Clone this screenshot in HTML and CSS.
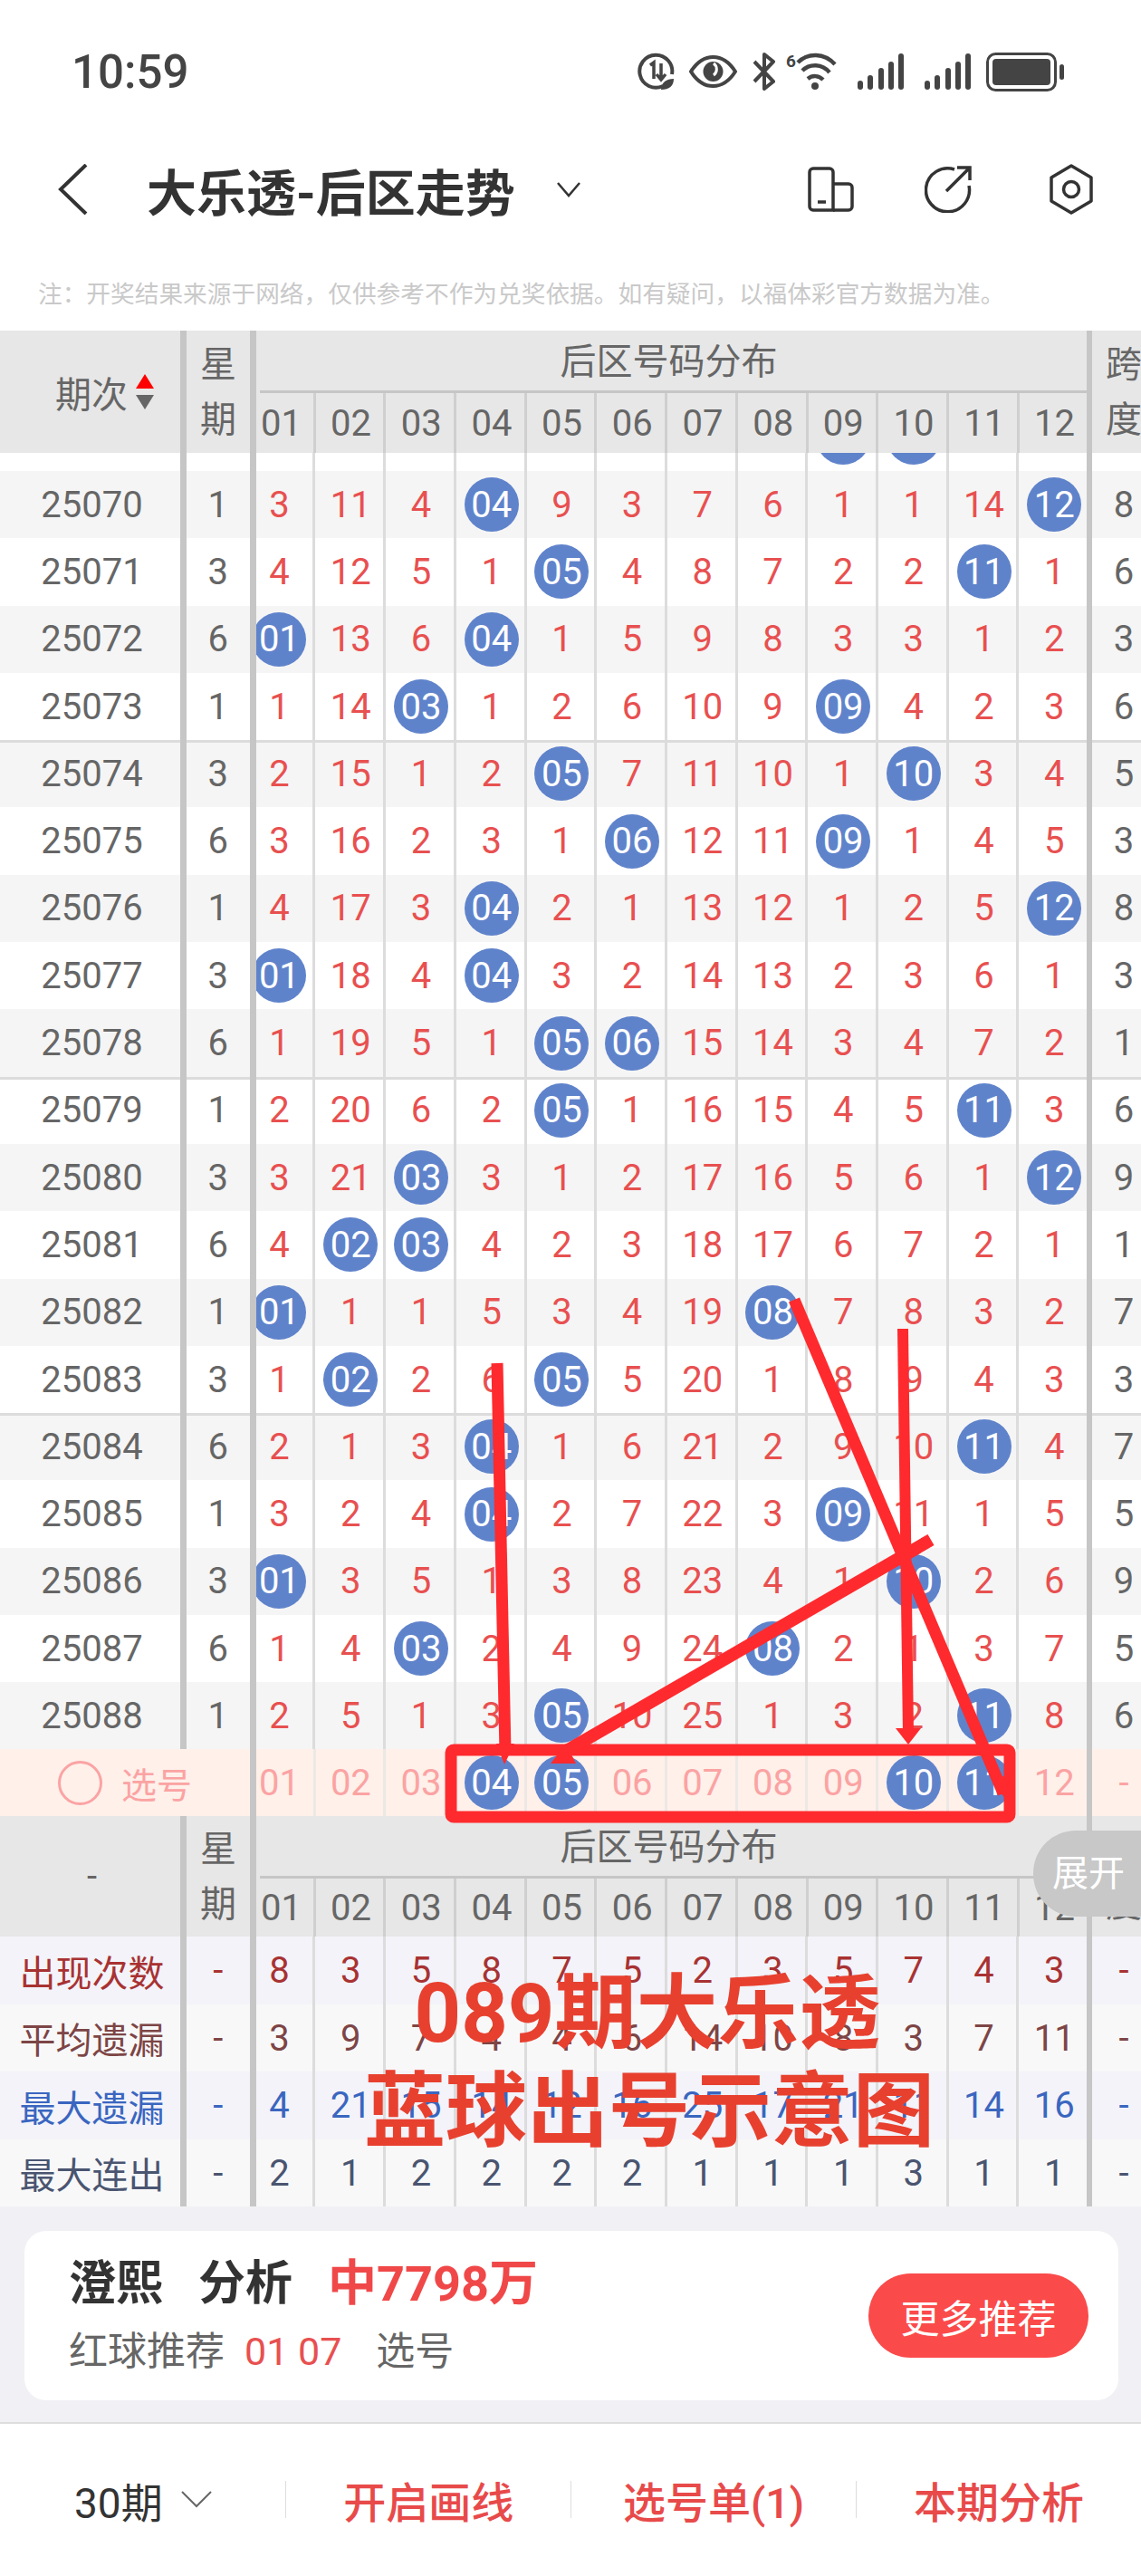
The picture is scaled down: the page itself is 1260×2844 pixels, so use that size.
FILE: index.html
```html
<!DOCTYPE html>
<html lang="zh-CN">
<head>
    <meta charset="UTF-8">
    <title>大乐透-后区走势</title>
    <link rel="stylesheet" href="styles.css">
</head>
<body>

<!-- 状态栏 -->
<div class="status">
    <span class="time">10:59</span>
    <div class="status-icons">
        <svg width="41" height="42" viewBox="0 0 41 42" fill="none" stroke="#444" stroke-width="4"><path d="M28 37 A18 18 0 1 1 38 24"/><path d="M14 14l4-3v18M26 12v17M21 24l5 6 5-6" stroke-width="3.500"/><path d="M26 41c0-8 6-12 14-12 0 8-5 12-14 12z" fill="#444" stroke="none"/></svg>
        <svg width="53" height="36" viewBox="0 0 53 36" fill="none" stroke="#444" stroke-width="4"><path d="M2 18C9 7 17 2 26.500 2S44 7 51 18C44 29 36 34 26.500 34S9 29 2 18z"/><circle cx="26.500" cy="18" r="11" fill="#444" stroke="none"/><path d="M27 9a8 8 0 0 1 0 13" stroke="#fff" stroke-width="3"/></svg>
        <svg width="27" height="42" viewBox="0 0 27 42" fill="none" stroke="#444" stroke-width="4" stroke-linejoin="round"><path d="M3 10l21 22-10 8V2l10 8L3 32"/></svg>
        <svg class="icon-wifi" width="57" height="42" viewBox="0 0 57 42" fill="none" stroke="#444" stroke-width="4.500"><text x="0" y="16" class="wifi-six">6</text><path d="M13 11C24 0 42 0 54 13M18 20c8-8 22-8 30 2M24 29c5-4 12-4 17 1"/><circle cx="32" cy="37" r="4" fill="#444" stroke="none"/></svg>
        <svg class="icon-sig" width="52" height="40" viewBox="0 0 52 40" fill="#444"><rect x="0" y="30" width="6" height="10" rx="3"/><rect x="11" y="24" width="6" height="16" rx="3"/><rect x="23" y="16" width="6" height="24" rx="3"/><rect x="34" y="9" width="6" height="31" rx="3"/><rect x="45" y="0" width="6" height="40" rx="3"/></svg>
        <svg class="icon-sig" width="52" height="40" viewBox="0 0 52 40" fill="#444"><rect x="0" y="30" width="6" height="10" rx="3"/><rect x="11" y="24" width="6" height="16" rx="3"/><rect x="23" y="16" width="6" height="24" rx="3"/><rect x="34" y="9" width="6" height="31" rx="3"/><rect x="45" y="0" width="6" height="40" rx="3"/></svg>
        <svg width="87" height="43" viewBox="0 0 87 43" fill="#444"><rect x="1.500" y="1.500" width="75" height="40" rx="9" fill="none" stroke="#444" stroke-width="3"/><rect x="7" y="7" width="64" height="29" rx="4"/><rect x="81" y="13" width="5" height="17" rx="2.500"/></svg>
    </div>
</div>

<!-- 标题栏 -->
<div class="nav">
    <svg class="nav-back" width="34" height="56" viewBox="0 0 34 56" fill="none" stroke="#333" stroke-width="4"><path d="M31 1L3 28l28 27"/></svg>
    <h1 class="nav-title">大乐透-后区走势</h1>
    <svg class="nav-down" width="26" height="17" viewBox="0 0 26 17" fill="none" stroke="#333" stroke-width="2.500"><path d="M1 1l12 14L25 1"/></svg>
    <svg class="nav-phone" width="51" height="50" viewBox="0 0 51 50" fill="none" stroke="#333" stroke-width="3.500"><path d="M6 2h18a4 4 0 0 1 4 4v42H6a4 4 0 0 1-4-4V6a4 4 0 0 1 4-4z"/><path d="M28 19h17a4 4 0 0 1 4 4v21a4 4 0 0 1-4 4H28"/><path d="M11 39h9"/></svg>
    <svg class="nav-share" width="52" height="52" viewBox="0 0 52 52" fill="none" stroke="#333" stroke-width="3.500"><path d="M33 4A24 24 0 1 0 49 22"/><path d="M24 28L50 2M36 2h14v14"/></svg>
    <svg class="nav-gear" width="50" height="56" viewBox="0 0 50 56" fill="none" stroke="#333" stroke-width="3.500" stroke-linejoin="round"><path d="M25 2l22 13v26L25 54 3 41V15z"/><circle cx="25" cy="28" r="8.500"/></svg>
</div>

<p class="note">注：开奖结果来源于网络，仅供参考不作为兑奖依据。如有疑问，以福体彩官方数据为准。</p>

<!-- 表头 -->
<div class="thead">
    <div class="th-qi">
        期次
        <span class="sort"><em class="up"></em><em class="down"></em></span>
    </div>
    <div class="th-wk"><span>星</span><span>期</span></div>
    <div class="th-mid">
        <div class="th-title">后区号码分布</div>
        <div class="th-nums"><i>01</i><i>02</i><i>03</i><i>04</i><i>05</i><i>06</i><i>07</i><i>08</i><i>09</i><i>10</i><i>11</i><i>12</i></div>
    </div>
    <div class="th-kd"><span>跨</span><span>度</span></div>
</div>

<!-- 走势数据 -->
<div class="rows">
    <div class="row row-first"><span class="qi"></span><span class="wk"></span><i></i><i></i><i></i><i></i><i></i><i></i><i></i><i></i><i><b></b></i><i><b></b></i><i></i><i></i><span class="kd"></span></div>
    <div class="row alt"><span class="qi">25070</span><span class="wk">1</span><i>3</i><i>11</i><i>4</i><i><b>04</b></i><i>9</i><i>3</i><i>7</i><i>6</i><i>1</i><i>1</i><i>14</i><i><b>12</b></i><span class="kd">8</span></div>
    <div class="row"><span class="qi">25071</span><span class="wk">3</span><i>4</i><i>12</i><i>5</i><i>1</i><i><b>05</b></i><i>4</i><i>8</i><i>7</i><i>2</i><i>2</i><i><b>11</b></i><i>1</i><span class="kd">6</span></div>
    <div class="row alt"><span class="qi">25072</span><span class="wk">6</span><i><b>01</b></i><i>13</i><i>6</i><i><b>04</b></i><i>1</i><i>5</i><i>9</i><i>8</i><i>3</i><i>3</i><i>1</i><i>2</i><span class="kd">3</span></div>
    <div class="row"><span class="qi">25073</span><span class="wk">1</span><i>1</i><i>14</i><i><b>03</b></i><i>1</i><i>2</i><i>6</i><i>10</i><i>9</i><i><b>09</b></i><i>4</i><i>2</i><i>3</i><span class="kd">6</span></div>
    <div class="row alt sep"><span class="qi">25074</span><span class="wk">3</span><i>2</i><i>15</i><i>1</i><i>2</i><i><b>05</b></i><i>7</i><i>11</i><i>10</i><i>1</i><i><b>10</b></i><i>3</i><i>4</i><span class="kd">5</span></div>
    <div class="row"><span class="qi">25075</span><span class="wk">6</span><i>3</i><i>16</i><i>2</i><i>3</i><i>1</i><i><b>06</b></i><i>12</i><i>11</i><i><b>09</b></i><i>1</i><i>4</i><i>5</i><span class="kd">3</span></div>
    <div class="row alt"><span class="qi">25076</span><span class="wk">1</span><i>4</i><i>17</i><i>3</i><i><b>04</b></i><i>2</i><i>1</i><i>13</i><i>12</i><i>1</i><i>2</i><i>5</i><i><b>12</b></i><span class="kd">8</span></div>
    <div class="row"><span class="qi">25077</span><span class="wk">3</span><i><b>01</b></i><i>18</i><i>4</i><i><b>04</b></i><i>3</i><i>2</i><i>14</i><i>13</i><i>2</i><i>3</i><i>6</i><i>1</i><span class="kd">3</span></div>
    <div class="row alt"><span class="qi">25078</span><span class="wk">6</span><i>1</i><i>19</i><i>5</i><i>1</i><i><b>05</b></i><i><b>06</b></i><i>15</i><i>14</i><i>3</i><i>4</i><i>7</i><i>2</i><span class="kd">1</span></div>
    <div class="row sep"><span class="qi">25079</span><span class="wk">1</span><i>2</i><i>20</i><i>6</i><i>2</i><i><b>05</b></i><i>1</i><i>16</i><i>15</i><i>4</i><i>5</i><i><b>11</b></i><i>3</i><span class="kd">6</span></div>
    <div class="row alt"><span class="qi">25080</span><span class="wk">3</span><i>3</i><i>21</i><i><b>03</b></i><i>3</i><i>1</i><i>2</i><i>17</i><i>16</i><i>5</i><i>6</i><i>1</i><i><b>12</b></i><span class="kd">9</span></div>
    <div class="row"><span class="qi">25081</span><span class="wk">6</span><i>4</i><i><b>02</b></i><i><b>03</b></i><i>4</i><i>2</i><i>3</i><i>18</i><i>17</i><i>6</i><i>7</i><i>2</i><i>1</i><span class="kd">1</span></div>
    <div class="row alt"><span class="qi">25082</span><span class="wk">1</span><i><b>01</b></i><i>1</i><i>1</i><i>5</i><i>3</i><i>4</i><i>19</i><i><b>08</b></i><i>7</i><i>8</i><i>3</i><i>2</i><span class="kd">7</span></div>
    <div class="row"><span class="qi">25083</span><span class="wk">3</span><i>1</i><i><b>02</b></i><i>2</i><i>6</i><i><b>05</b></i><i>5</i><i>20</i><i>1</i><i>8</i><i>9</i><i>4</i><i>3</i><span class="kd">3</span></div>
    <div class="row alt sep"><span class="qi">25084</span><span class="wk">6</span><i>2</i><i>1</i><i>3</i><i><b>04</b></i><i>1</i><i>6</i><i>21</i><i>2</i><i>9</i><i>10</i><i><b>11</b></i><i>4</i><span class="kd">7</span></div>
    <div class="row"><span class="qi">25085</span><span class="wk">1</span><i>3</i><i>2</i><i>4</i><i><b>04</b></i><i>2</i><i>7</i><i>22</i><i>3</i><i><b>09</b></i><i>11</i><i>1</i><i>5</i><span class="kd">5</span></div>
    <div class="row alt"><span class="qi">25086</span><span class="wk">3</span><i><b>01</b></i><i>3</i><i>5</i><i>1</i><i>3</i><i>8</i><i>23</i><i>4</i><i>1</i><i><b>10</b></i><i>2</i><i>6</i><span class="kd">9</span></div>
    <div class="row"><span class="qi">25087</span><span class="wk">6</span><i>1</i><i>4</i><i><b>03</b></i><i>2</i><i>4</i><i>9</i><i>24</i><i><b>08</b></i><i>2</i><i>1</i><i>3</i><i>7</i><span class="kd">5</span></div>
    <div class="row alt"><span class="qi">25088</span><span class="wk">1</span><i>2</i><i>5</i><i>1</i><i>3</i><i><b>05</b></i><i>10</i><i>25</i><i>1</i><i>3</i><i>2</i><i><b>11</b></i><i>8</i><span class="kd">6</span></div>
</div>

<!-- 选号行 -->
<div class="row pick">
    <span class="qi"><em class="pick-dot"></em>选号</span><span class="wk"></span>
    <i>01</i><i>02</i><i>03</i><i><b>04</b></i><i><b>05</b></i><i>06</i><i>07</i><i>08</i><i>09</i><i><b>10</b></i><i><b>11</b></i><i>12</i><span class="kd">-</span>
</div>

<!-- 统计 -->
<div class="thead thead-b">
    <div class="th-qi th-dash">-</div>
    <div class="th-wk"><span>星</span><span>期</span></div>
    <div class="th-mid">
        <div class="th-title">后区号码分布</div>
        <div class="th-nums"><i>01</i><i>02</i><i>03</i><i>04</i><i>05</i><i>06</i><i>07</i><i>08</i><i>09</i><i>10</i><i>11</i><i>12</i></div>
    </div>
    <div class="th-kd"><span>跨</span><span>度</span></div>
</div>
<div class="row stat stat-count"><span class="qi">出现次数</span><span class="wk">-</span><i>8</i><i>3</i><i>5</i><i>8</i><i>7</i><i>5</i><i>2</i><i>3</i><i>5</i><i>7</i><i>4</i><i>3</i><span class="kd">-</span></div>
<div class="row stat stat-avg"><span class="qi">平均遗漏</span><span class="wk">-</span><i>3</i><i>9</i><i>7</i><i>4</i><i>4</i><i>6</i><i>14</i><i>10</i><i>8</i><i>3</i><i>7</i><i>11</i><span class="kd">-</span></div>
<div class="row stat stat-max"><span class="qi">最大遗漏</span><span class="wk">-</span><i>4</i><i>21</i><i>15</i><i>14</i><i>12</i><i>16</i><i>25</i><i>17</i><i>21</i><i>11</i><i>14</i><i>16</i><span class="kd">-</span></div>
<div class="row stat stat-run"><span class="qi">最大连出</span><span class="wk">-</span><i>2</i><i>1</i><i>2</i><i>2</i><i>2</i><i>2</i><i>1</i><i>1</i><i>1</i><i>3</i><i>1</i><i>1</i><span class="kd">-</span></div>

<!-- 推荐卡片 -->
<div class="rec">
    <div class="rec-card">
        <div class="rec-text">
            <div class="rec-head"><span>澄熙</span><span>分析</span><span class="rec-win">中7798万</span></div>
            <div class="rec-sub"><span>红球推荐</span><span class="rec-nums">01 07</span><span>选号</span></div>
        </div>
        <button class="rec-btn">更多推荐</button>
    </div>
</div>

<!-- 底部栏 -->
<div class="tabs">
    <div class="tab tab-first">30期
        <svg width="34" height="19" viewBox="0 0 34 19" fill="none" stroke="#666" stroke-width="2"><path d="M1 1l16 16L33 1"/></svg>
    </div>
    <div class="tab">开启画线</div>
    <div class="tab">选号单(1)</div>
    <div class="tab">本期分析</div>
</div>

<!-- 浮层：展开按钮与手绘标注 -->
<div class="expand">展开</div>

<svg class="marks" width="1260" height="2844" viewBox="0 0 1260 2844" fill="#ff2a2e" stroke="none">
    <g stroke="#ff2a2e" fill="none">
        <rect x="498" y="1932" width="617" height="74" rx="3" stroke-width="13"/>
        <path d="M549 1505L558 1935" stroke-width="13"/>
        <path d="M1028 1700L622 1935" stroke-width="14"/>
        <path d="M877 1435L1108 1980" stroke-width="13"/>
        <path d="M997 1467L1003 1915" stroke-width="12"/>
    </g>
    <path d="M548 1925h20l-11 23z"/>
    <path d="M608 1947h28l-11-22z"/>
    <path d="M989 1908h28l-14 18z"/>
    <path d="M1095 1965l20-6-5 27z"/>
</svg>

<div class="caption">
    <div>089期大乐透</div>
    <div>蓝球出号示意图</div>
</div>

</body>
</html>
```

FILE: styles.css
```css
* {
    box-sizing: border-box;
}
html, body {
    margin: 0;
    padding: 0;
}
body {
    position: relative;
    width: 1260px;
    height: 2844px;
    overflow: hidden;
    background: #fff;
    font-family: Roboto, "Noto Sans CJK SC", sans-serif;
    color: #666;
}

/* 状态栏 */
.status {
    height: 158px;
    padding: 0 84px 0 79px;
    display: flex;
    align-items: center;
    justify-content: space-between;
}
.time {
    font-size: 51px;
    font-weight: 500;
    color: #444;
}
.status-icons {
    display: flex;
    align-items: center;
    gap: 16px;
}
.icon-wifi {
    margin-left: -5px;
}
.icon-sig {
    margin-left: 6px;
}
.wifi-six {
    font: 700 19px Roboto, sans-serif;
    fill: #444;
    stroke: none;
}

/* 标题栏 */
.nav {
    height: 102px;
    display: flex;
    align-items: center;
}
.nav-back {
    margin-left: 64px;
}
.nav-title {
    margin: 0 0 0 64px;
    width: 403px;
    font-size: 55px;
    font-weight: 700;
    color: #333;
    white-space: nowrap;
}
.nav-down {
    margin-left: 50px;
}
.nav-phone {
    margin-left: 251px;
}
.nav-share {
    margin-left: 78px;
}
.nav-gear {
    margin-left: 85px;
}

.note {
    height: 105px;
    margin: 0;
    padding: 47px 0 0 42px;
    font-size: 26.700px;
    line-height: 36px;
    color: #c9c9c9;
    white-space: nowrap;
}

/* 表头 */
.thead {
    height: 135px;
    display: flex;
    background: #e7e7e7;
    font-size: 40px;
}
.thead-b {
    height: 133px;
}
.th-qi {
    width: 206px;
    border-right: 7px solid #c6c6c6;
    padding-left: 61px;
    display: flex;
    align-items: center;
    gap: 9px;
}
.th-dash {
    padding-left: 4px;
    justify-content: center;
}
.sort {
    display: flex;
    flex-direction: column;
    gap: 7px;
}
.sort em {
    display: block;
    width: 0;
    height: 0;
    border-left: 10px solid transparent;
    border-right: 10px solid transparent;
}
.sort .up {
    border-bottom: 16px solid #f00;
}
.sort .down {
    border-top: 16px solid #666;
}
.th-wk {
    width: 77px;
    border-right: 7px solid #c6c6c6;
    display: flex;
    flex-direction: column;
    align-items: center;
    justify-content: center;
    line-height: 61px;
}
.th-mid {
    width: 917px;
    display: flex;
    flex-direction: column;
}
.th-title {
    height: 66px;
    line-height: 70px;
    padding-right: 6px;
    text-align: center;
    white-space: nowrap;
}
.th-nums {
    flex: 1;
    display: flex;
    border-top: 3px solid #c6c6c6;
    margin-left: 4px;
}
.th-nums i {
    flex: 0 0 77.700px;
    border-right: 3px solid #cfcfcf;
    padding-left: 3px;
    display: flex;
    align-items: center;
    justify-content: center;
    font-style: normal;
}
.th-nums i:first-child {
    flex-basis: 61.700px;
    padding: 0 11.500px 0 0;
}
.th-nums i:last-child {
    flex-basis: 74.700px;
    border-right: 0;
}
.th-kd {
    width: 60px;
    border-left: 6px solid #c6c6c6;
    padding-left: 16px;
    display: flex;
    flex-direction: column;
    align-items: center;
    justify-content: center;
    line-height: 61px;
    white-space: nowrap;
}

/* 数据行 */
.rows {
    height: 1431px;
    overflow: hidden;
}
.row {
    height: 74.300px;
    display: flex;
    font-size: 40px;
    background: #fff;
}
.row-first {
    margin-top: -54.300px;
}
.alt {
    background: #f5f5f5;
}
.sep {
    box-shadow: inset 0 3px 0 #dcdcdc;
}
.qi, .wk, .kd, .row i {
    display: flex;
    align-items: center;
    justify-content: center;
    font-style: normal;
}
.qi {
    width: 206px;
    border-right: 7px solid #c6c6c6;
    padding-left: 4px;
}
.wk {
    width: 77px;
    border-right: 7px solid #c6c6c6;
}
.kd {
    width: 60px;
    border-left: 6px solid #c6c6c6;
    padding-left: 16px;
}
.row i {
    flex: 0 0 77.700px;
    border-right: 3px solid #dcdcdc;
    padding-left: 3px;
    color: #e85050;
}
.row .wk + i {
    flex-basis: 65.700px;
    padding: 0 11.500px 0 0;
    overflow: hidden;
}
.row i:last-of-type {
    flex-basis: 74.700px;
    border-right: 0;
}
.row b {
    flex: 0 0 60px;
    height: 60px;
    border-radius: 50%;
    background: #5f83cb;
    color: #fff;
    font-weight: 400;
    display: flex;
    align-items: center;
    justify-content: center;
}

/* 选号行 */
.pick {
    background: #fff0ea;
}
.pick .qi {
    border-right: 0;
    padding: 0 0 0 64px;
    justify-content: flex-start;
    color: #fba3a3;
    font-size: 39px;
    white-space: nowrap;
}
.pick-dot {
    flex: 0 0 49px;
    height: 49px;
    margin-right: 21px;
    border: 3px solid #fba3a3;
    border-radius: 50%;
}
.pick i, .pick .kd {
    color: #fba3a3;
}
.pick i {
    border-right-color: #ece8e5;
}

/* 统计行 */
.stat {
    height: 74.500px;
}
.stat-count, .stat-max {
    background: #f3f3f9;
}
.stat-avg, .stat-run {
    background: #f8f8f9;
}
.stat-count .qi, .stat-count .wk, .stat-count i, .stat-count .kd {
    color: #a83232;
}
.stat-avg .qi, .stat-avg .wk, .stat-avg i, .stat-avg .kd {
    color: #7d4545;
}
.stat-max .qi, .stat-max .wk, .stat-max i, .stat-max .kd {
    color: #3a66c0;
}
.stat-run .qi, .stat-run .wk, .stat-run i, .stat-run .kd {
    color: #4a5570;
}

/* 推荐卡片 */
.rec {
    height: 240px;
    padding: 27px 25px 0 27px;
    background: #f1f1f5;
    border-bottom: 2px solid #ddd;
}
.rec-card {
    height: 187px;
    padding: 0 33px 0 49px;
    display: flex;
    align-items: center;
    justify-content: space-between;
    background: #fff;
    border-radius: 24px;
}
.rec-text {
    margin-top: 5px;
}
.rec-head {
    display: flex;
    align-items: center;
    gap: 39px;
    font-size: 52px;
    font-weight: 700;
    color: #333;
    line-height: 74px;
}
.rec-win {
    font-size: 54px;
    color: #f04848;
}
.rec-sub {
    display: flex;
    gap: 22px;
    font-size: 43px;
    color: #666;
    line-height: 74px;
}
.rec-nums {
    margin-right: 16px;
    color: #e85050;
}
.rec-btn {
    width: 243px;
    height: 93px;
    border: none;
    border-radius: 47px;
    background: #fb4a4a;
    color: #fff;
    font-family: inherit;
    font-size: 43px;
}

/* 底部栏 */
.tabs {
    height: 167px;
    display: flex;
    align-items: center;
}
.tab {
    width: 316px;
    height: 41px;
    display: flex;
    align-items: center;
    justify-content: center;
    border-left: 1px solid #ddd;
    font-size: 47px;
    font-weight: 500;
    color: #e84a4a;
    white-space: nowrap;
}
.tab-first {
    justify-content: flex-start;
    gap: 20px;
    padding-left: 82px;
    border-left: 0;
    font-size: 46px;
    font-weight: 400;
    color: #333;
}

/* 浮层 */
.expand {
    position: absolute;
    left: 1141px;
    top: 2021px;
    width: 119px;
    height: 95px;
    padding: 0 0 0 21px;
    border-radius: 47px 0 0 47px;
    background: #c8c8c8;
    color: #fff;
    font-size: 40px;
    line-height: 95px;
    white-space: nowrap;
}
.marks {
    position: absolute;
    left: 0;
    top: 0;
}
.caption {
    position: absolute;
    left: 402px;
    top: 2170px;
    width: 626px;
    text-align: center;
    color: #e8402f;
    font-size: 90px;
    font-weight: 700;
    line-height: 108px;
    white-space: nowrap;
}
```
